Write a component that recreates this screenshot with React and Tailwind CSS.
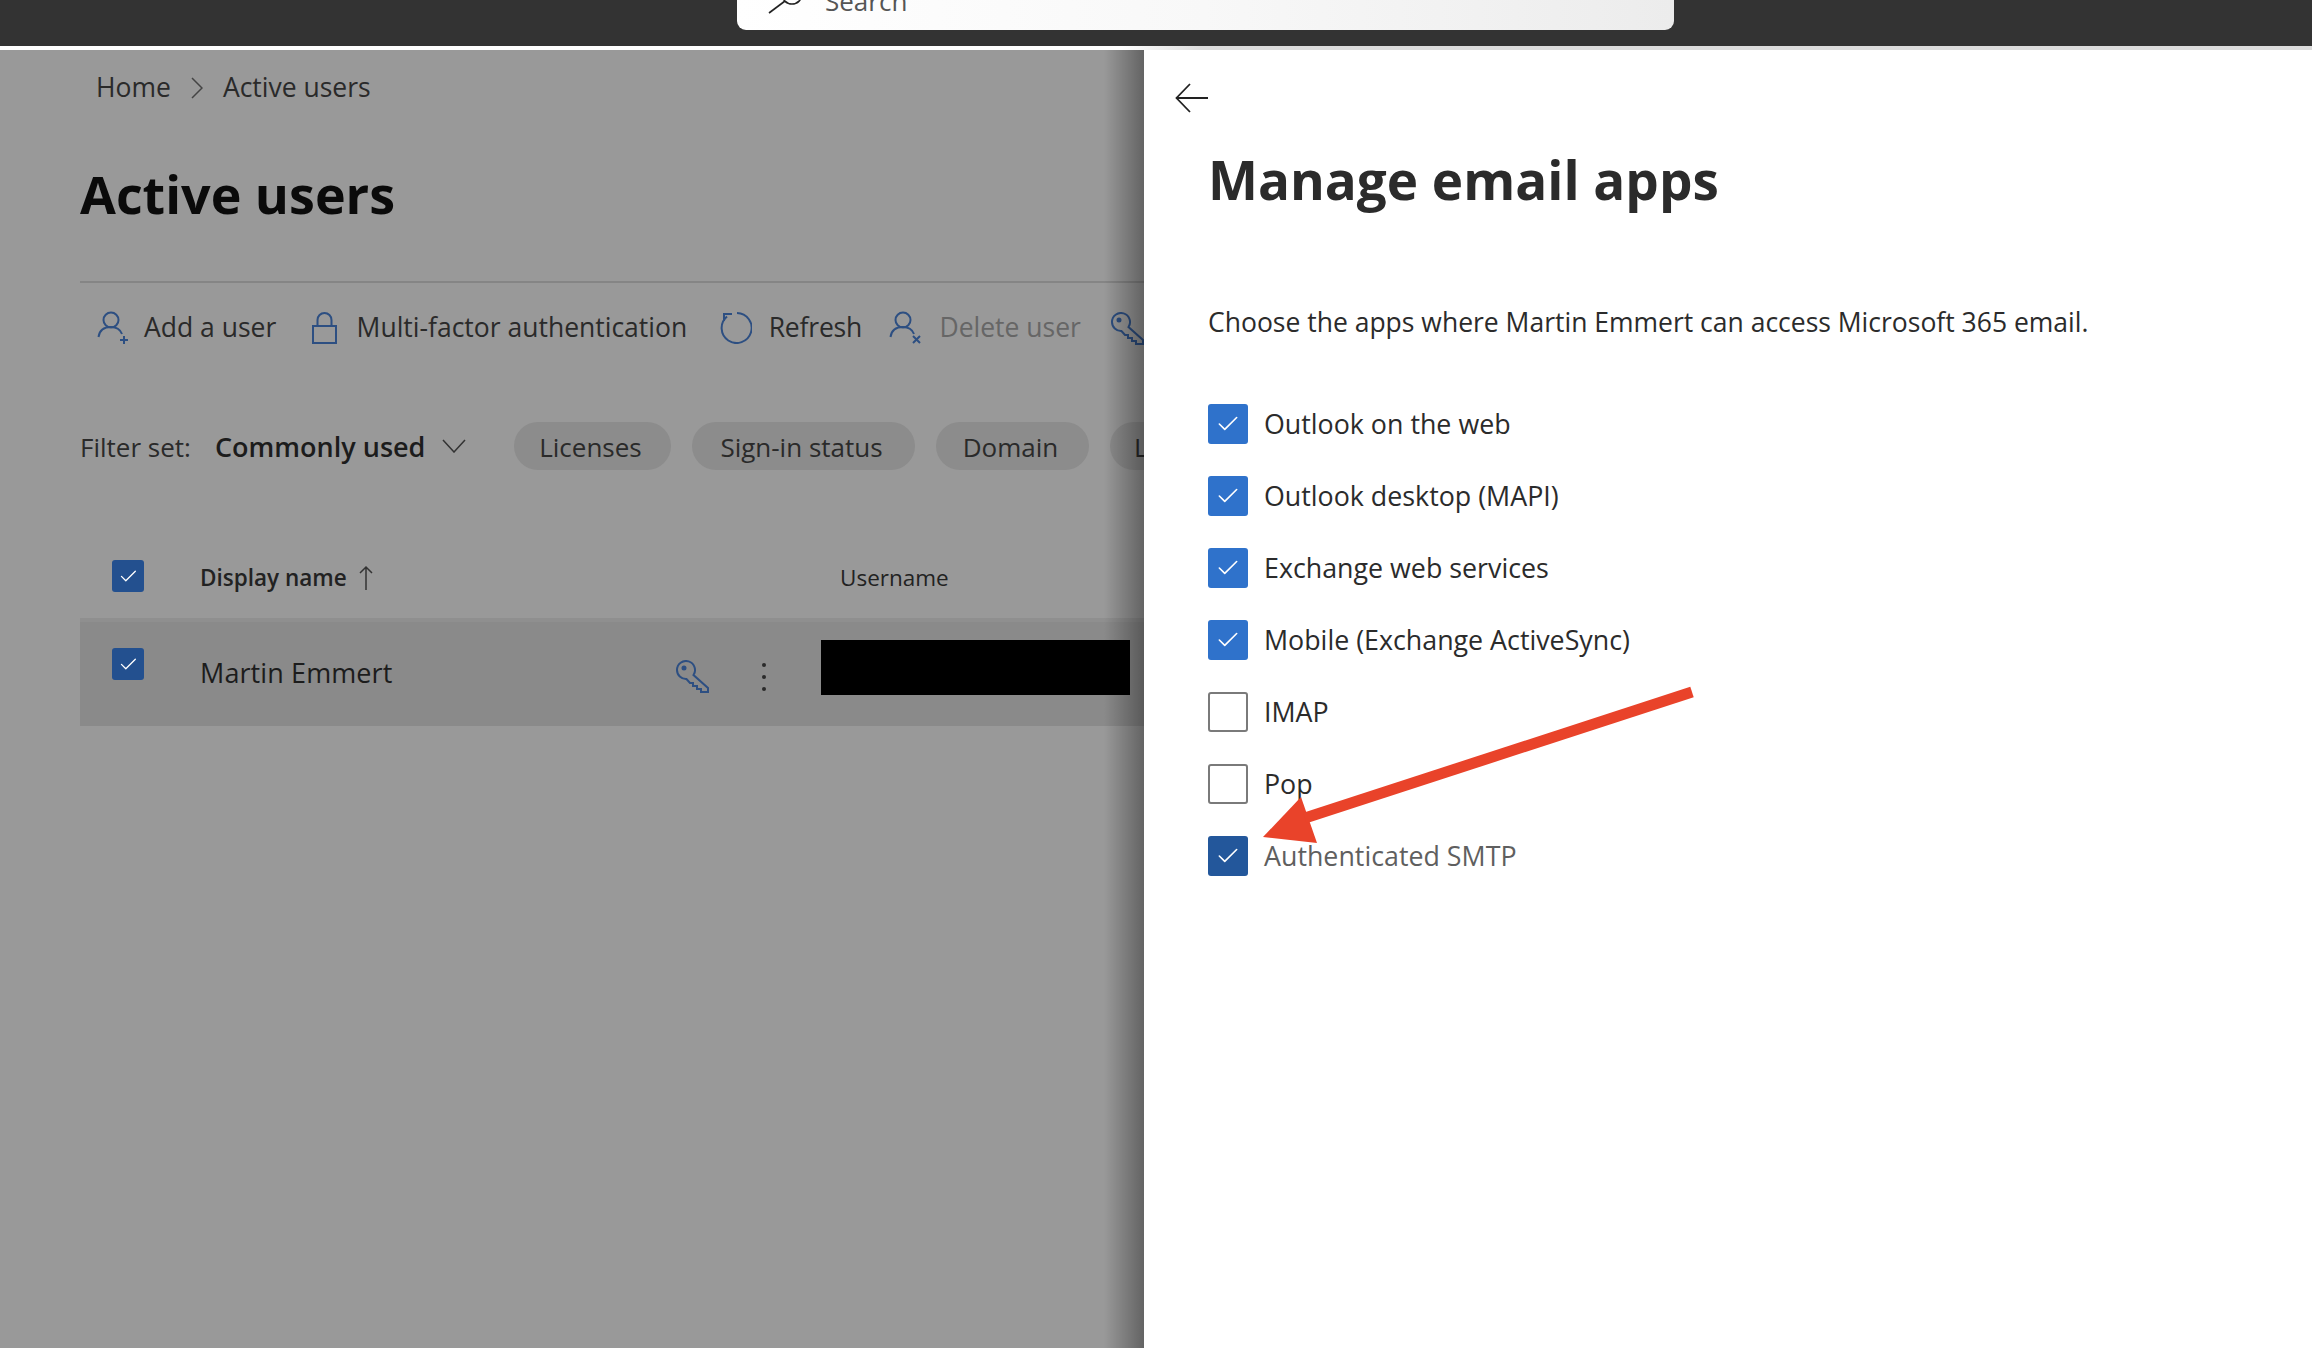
import { Check } from "lucide-react";

const apps = [
  { name: "Outlook on the web", checked: true },
  { name: "Outlook desktop (MAPI)", checked: true },
  { name: "Exchange web services", checked: true },
  { name: "Mobile (Exchange ActiveSync)", checked: true },
  { name: "IMAP", checked: false },
  { name: "Pop", checked: false },
  { name: "Authenticated SMTP", checked: true, focused: true },
];

const UserIcon = ({ badge }) => (
  <svg width="34" height="34" viewBox="0 0 34 34" fill="none" stroke="#2d4f82" strokeWidth="2" className="shrink-0">
    <circle cx="14" cy="9" r="7.500" />
    <path d="M1.500 26c1-7 6-10 12.500-10 5 0 9 2 11 7" />
    {badge === "plus" && <path d="M27 25v8M23 29h8" />}
    {badge === "x" && <path d="M24 25l7 7M31 25l-7 7" />}
  </svg>
);

const KeyIcon = ({ className }) => (
  <svg width="34" height="33" viewBox="0 0 34 33" fill="none" stroke="#2d4f82" strokeWidth="2" className={className}>
    <path d="M2 10a9 9 0 1 1 16.500 5L33 28v4h-7v-3h-4v-3h-4v-3h-3l-3.500-4A9 9 0 0 1 2 10z" />
    <circle cx="9" cy="8" r="1.500" fill="#2d4f82" />
  </svg>
);

const Box = ({ checked, color, className = "" }) => (
  <div
    className={`flex items-center justify-center rounded-[3px] ${className}`}
    style={{ backgroundColor: color }}
  >
    {checked && <Check className="w-[65%] h-[65%] text-white" strokeWidth={1.5} />}
  </div>
);

const App = () => {
  return (
    <div className="relative w-[2312px] h-[1348px] overflow-hidden bg-[#999999] font-['Open_Sans',sans-serif] text-[#1c1c1c]">
      {/* suite header */}
      <div className="h-[46px] bg-[#333333] pl-[737px]">
        <div className="w-[937px] h-[30px] overflow-hidden rounded-b-[9px] bg-gradient-to-r from-white via-[#f8f8f8] to-[#ececec] flex items-end pl-[30px]">
          <svg width="36" height="34" viewBox="0 0 36 34" fill="none" stroke="#222" strokeWidth="1.600" className="shrink-0 mb-[16px]">
            <circle cx="25" cy="14" r="10" />
            <path d="M18 21L2 33" />
          </svg>
          <span className="ml-[22px] mb-[13px] text-[26px] leading-[32px] text-[#555]">Search</span>
        </div>
      </div>
      <div className="h-[4px] bg-gradient-to-r from-white from-[48.5%] to-[#dcdcdc] to-[52%]" />

      <div className="flex h-[1298px]">
        {/* page behind the panel */}
        <div className="relative w-[1144px] shrink-0 overflow-hidden">
          <div className="h-[75px] pl-[96px] flex items-center text-[26.500px] text-[#2a2a2a]">
            <span>Home</span>
            <svg width="12" height="22" viewBox="0 0 12 22" fill="none" stroke="#444" strokeWidth="1.500" className="ml-[20px] mr-[20px]">
              <path d="M1 1l10 10L1 21" />
            </svg>
            <span>Active users</span>
          </div>
          <div className="h-[138px] pl-[80px] flex items-center text-[52px] font-bold text-[#0a0a0a]">
            Active users
          </div>
          <div className="mt-[18px] ml-[80px] h-[2px] bg-[#858585]" />

          <div className="h-[90px] pl-[97px] flex items-center text-[26.500px] text-[#2a2a2a] whitespace-nowrap">
            <UserIcon badge="plus" />
            <span className="ml-[13px] w-[168px]">Add a user</span>
            <svg width="26" height="32" viewBox="0 0 26 32" fill="none" stroke="#2d4f82" strokeWidth="2" className="shrink-0">
              <rect x="1" y="14" width="23" height="17" />
              <path d="M5.500 14V8a7 7 0 0 1 14 0v6" />
            </svg>
            <span className="ml-[19px] w-[364px]">Multi-factor authentication</span>
            <svg width="32" height="32" viewBox="0 0 32 32" fill="none" stroke="#2d4f82" strokeWidth="2" className="shrink-0">
              <path d="M7 4.500A15 15 0 1 0 17 1M4 9V2h8" />
            </svg>
            <span className="ml-[17px] w-[121px] tracking-[-0.2px]">Refresh</span>
            <UserIcon badge="x" />
            <span className="ml-[16px] w-[171px] text-[#666666]">Delete user</span>
            <KeyIcon className="shrink-0" />
          </div>

          <div className="mt-[49px] h-[48px] pl-[80px] flex items-center text-[26px] whitespace-nowrap">
            <span className="w-[135px] shrink-0 pt-[3px] text-[#2a2a2a]">Filter set:</span>
            <span className="w-[227px] shrink-0 pt-[3px] text-[27px] font-semibold text-[#1c1c1c]">Commonly used</span>
            <svg width="24" height="14" viewBox="0 0 24 14" fill="none" stroke="#333" strokeWidth="1.500" className="shrink-0">
              <path d="M1 1l11 12L23 1" />
            </svg>
            <div className="ml-[48px] flex gap-[21px] text-[#2a2a2a] shrink-0">
              <div className="h-[48px] w-[157px] pt-[3px] pr-[4px] rounded-full bg-[#8c8c8c] flex items-center justify-center">Licenses</div>
              <div className="h-[48px] w-[223px] pt-[3px] pr-[4px] rounded-full bg-[#8c8c8c] flex items-center justify-center">Sign-in status</div>
              <div className="h-[48px] w-[153px] pt-[3px] pr-[4px] rounded-full bg-[#8c8c8c] flex items-center justify-center">Domain</div>
              <div className="h-[48px] w-[150px] pt-[3px] rounded-full bg-[#8c8c8c] pl-[24px] flex items-center">Location</div>
            </div>
          </div>

          <div className="mt-[68px] h-[80px] flex items-center text-[22.500px] text-[#222222]">
            <Box checked color="#23508f" className="ml-[112px] w-[32px] h-[32px] -mt-[4px]" />
            <span className="ml-[56px] font-semibold">Display name</span>
            <svg width="14" height="26" viewBox="0 0 14 26" fill="none" stroke="#333" strokeWidth="1.500" className="ml-[12px]">
              <path d="M7 25V2M1 8l6-6 6 6" />
            </svg>
            <span className="absolute left-[840px]">Username</span>
          </div>

          <div className="ml-[80px] h-[108px] bg-[#8a8a8a] border-t-4 border-[#8f8f8f] flex items-start text-[27px] font-medium text-[#1c1c1c]">
            <Box checked color="#23508f" className="ml-[32px] mt-[26px] w-[32px] h-[32px] shrink-0" />
            <span className="ml-[56px] mt-[31px] w-[475px] leading-[40px] tracking-[0.1px] shrink-0">Martin Emmert</span>
            <KeyIcon className="mt-[38px] shrink-0" />
            <svg width="6" height="30" viewBox="0 0 6 30" fill="#2a2a2a" className="ml-[52px] mt-[40px] shrink-0">
              <circle cx="3" cy="3" r="2" />
              <circle cx="3" cy="15" r="2" />
              <circle cx="3" cy="27" r="2" />
            </svg>
            <div className="ml-[54px] mt-[18px] w-[309px] h-[55px] bg-black shrink-0" />
          </div>

          {/* panel shadow */}
          <div className="absolute inset-y-0 right-0 w-[40px] bg-gradient-to-r from-transparent to-black/35" />
        </div>

        {/* flyout */}
        <div className="flex-1 bg-white pl-[64px] text-[#2b2b2b]">
          <svg width="34" height="30" viewBox="0 0 34 30" fill="none" stroke="#222" strokeWidth="1.800" className="-ml-[33px] mt-[33px]">
            <path d="M33 15H2M15 1L1.500 15 15 29" />
          </svg>
          <h1 className="mt-[32px] h-[70px] flex items-center text-[53px] font-bold">Manage email apps</h1>
          <p className="mt-[83px] h-[50px] flex items-center text-[26.500px] whitespace-nowrap">
            Choose the apps where Martin Emmert can access Microsoft 365 email.
          </p>
          <div className="mt-[56px] flex flex-col gap-[32px]">
            {apps.map((app) => (
              <div key={app.name} className="flex items-center gap-[16px] h-[40px] text-[26.800px]">
                {app.checked ? (
                  <Box checked color={app.focused ? "#23579b" : "#2f72cb"} className="w-[40px] h-[40px]" />
                ) : (
                  <div className="w-[40px] h-[40px] rounded-[3px] border-2 border-[#7a7a7a]" />
                )}
                <span className={app.focused ? "text-[#5f5f5f]" : ""}>{app.name}</span>
              </div>
            ))}
          </div>
        </div>
      </div>

      {/* annotation arrow */}
      <svg className="absolute left-[1250px] top-[680px]" width="450" height="170" viewBox="0 0 450 170" fill="#e9432a">
        <polygon points="13,157 51,117 67,163" />
        <path d="M55 138L442 12" stroke="#e9432a" strokeWidth="11" />
      </svg>
    </div>
  );
};

export default App;
